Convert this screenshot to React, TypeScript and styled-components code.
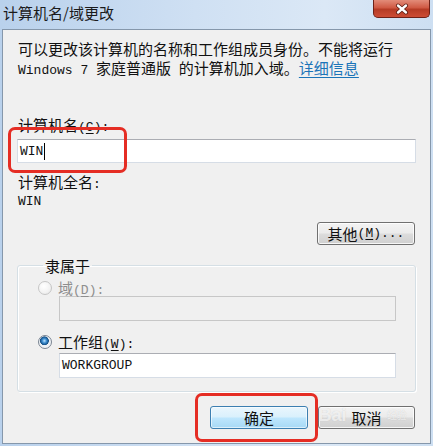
import React from "react";
import styled, { createGlobalStyle, css } from "styled-components";

const GlobalStyle = createGlobalStyle`
  html, body { margin: 0; padding: 0; }
  body { width: 433px; height: 446px; overflow: hidden; background: #cadcf1; }
  * { box-sizing: border-box; }
`;

const Window = styled.div`
  position: relative;
  width: 433px;
  height: 446px;
  display: flex;
  flex-direction: column;
  background: linear-gradient(to right, #b9d1ec 0%, #cfe0f3 45%, #dbe8f6 75%, #cddff2 100%);
  font-family: "Noto Sans CJK SC", sans-serif;
  color: #111;
`;

const TitleBar = styled.div`
  height: 29px;
  flex-shrink: 0;
  display: flex;
  align-items: flex-start;
  justify-content: space-between;
  padding: 0 3px 0 3px;
`;

const Title = styled.div`
  font-size: 15px;
  line-height: 18px;
  margin-top: 4px;
  color: #1b1b1b;
`;

const CloseButton = styled.div`
  flex-shrink: 0;
  width: 57px;
  height: 18px;
  border: 1px solid #6e2118;
  border-top: none;
  border-radius: 0 0 5px 5px;
  background-color: #c0422c;
  display: flex;
  align-items: center;
  justify-content: center;
  overflow: hidden;
`;

const CloseGloss = styled.div`
  width: 100%;
  height: 100%;
  display: flex;
  align-items: center;
  justify-content: center;
  background: linear-gradient(to bottom, rgba(255, 200, 185, 0.55) 0%, rgba(255, 160, 140, 0.25) 45%, rgba(120, 20, 0, 0.15) 55%, rgba(255, 120, 90, 0.2) 100%);
`;

const Client = styled.div`
  flex: 1;
  margin: 0 2px 2px 2px;
  border: 1px solid #8597ab;
  background: #f0f0f0;
  padding: 9px 14px 0 14px;
  display: flex;
  flex-direction: column;
  font-size: 15px;
  line-height: 17px;
`;

const Lat = styled.span`
  font-family: "Liberation Mono", monospace;
  font-size: 13px;
  line-height: 1;
`;

const Key = styled.span`
  text-decoration: underline;
  text-underline-offset: 2px;
`;

const Description = styled.div`
  line-height: 19px;
  height: 38px;
  padding-left: 1px;
  white-space: nowrap;
`;

const Link = styled.span`
  color: #1b74b8;
  text-decoration: underline;
  text-underline-offset: 3px;
`;

const Label = styled.div<{ $mt?: number; $lh?: number }>`
  margin-top: ${(p) => p.$mt ?? 0}px;
  line-height: ${(p) => p.$lh ?? 17}px;
  height: ${(p) => p.$lh ?? 17}px;
  padding-left: 1px;
  white-space: nowrap;
`;

const TextBox = styled.div<{ $mt?: number; $h?: number; $disabled?: boolean; $pl?: number }>`
  margin-top: ${(p) => p.$mt ?? 0}px;
  height: ${(p) => p.$h ?? 24}px;
  flex-shrink: 0;
  border: 1px solid #d6dde6;
  border-top-color: #abadb3;
  background: ${(p) => (p.$disabled ? "#f0f0f0" : "#ffffff")};
  ${(p) =>
    p.$disabled &&
    css`
      border-color: #c7c7c7;
    `}
  display: flex;
  align-items: center;
  padding-left: ${(p) => p.$pl ?? 2}px;
`;

const Caret = styled.span`
  display: inline-block;
  width: 1px;
  height: 17px;
  background: #000;
  margin-left: 1px;
`;

const ButtonRow = styled.div<{ $mt: number }>`
  margin-top: ${(p) => p.$mt}px;
  display: flex;
  justify-content: flex-end;
  gap: 10px;
  padding-right: 1px;
  flex-shrink: 0;
`;

const Button = styled.div<{ $default?: boolean; $w: number }>`
  width: ${(p) => p.$w}px;
  height: 23px;
  border: 1px solid #707070;
  border-radius: 3px;
  background: linear-gradient(to bottom, #f3f3f3 0%, #ebebeb 48%, #dcdcdc 52%, #d0d0d0 100%);
  box-shadow: inset 0 0 0 1px rgba(255, 255, 255, 0.8);
  display: flex;
  align-items: center;
  justify-content: center;
  white-space: nowrap;
  ${(p) =>
    p.$default &&
    css`
      border-color: #3c7fb1;
      background: linear-gradient(to bottom, #eaf6fd 0%, #d9f0fc 48%, #bee6fd 52%, #a7d9f5 100%);
      box-shadow: inset 0 0 0 1px rgba(255, 255, 255, 0.6);
    `}
`;

const GroupBox = styled.fieldset`
  margin: 12px 0 0 0;
  padding: 0 19px 13px 20px;
  border: 1px solid #d5dfe5;
  border-radius: 3px;
  box-shadow: inset 1px 1px 0 #ffffff, 1px 1px 0 #ffffff;
  min-width: 0;
  flex-shrink: 0;
`;

const Legend = styled.legend`
  margin-left: 5px;
  padding: 0 2px;
  line-height: 17px;
  height: 17px;
  font-size: 15px;
`;

const RadioRow = styled.div<{ $mt?: number; $disabled?: boolean }>`
  margin-top: ${(p) => p.$mt ?? 0}px;
  height: 17px;
  display: flex;
  align-items: center;
  gap: 6px;
  color: ${(p) => (p.$disabled ? "#8e8e8e" : "#111")};
`;

const Radio = styled.span<{ $checked?: boolean; $disabled?: boolean }>`
  width: 14px;
  height: 14px;
  border-radius: 50%;
  flex-shrink: 0;
  border: 1px solid ${(p) => (p.$disabled ? "#c6c6c6" : "#7b8593")};
  background: ${(p) =>
    p.$checked
      ? "radial-gradient(circle at 45% 40%, #bfe4ff 0%, #3c8dd0 22%, #134f86 42%, #e9eef3 48%, #fbfbfb 100%)"
      : p.$disabled
      ? "radial-gradient(circle at 40% 35%, #ffffff 0%, #f2f2f2 60%, #e2e2e2 100%)"
      : "#fff"};
`;

const FieldIndent = styled.div`
  margin-left: 21px;
`;

const Highlight = styled.div<{ $x: number; $y: number; $w: number; $h: number }>`
  position: absolute;
  left: ${(p) => p.$x}px;
  top: ${(p) => p.$y}px;
  width: ${(p) => p.$w}px;
  height: ${(p) => p.$h}px;
  border: 3px solid #e52d24;
  border-radius: 7px;
  pointer-events: none;
`;

const Watermark = styled.div`
  position: absolute;
  left: 318px;
  top: 404px;
  width: 88px;
  display: flex;
  justify-content: space-between;
  font-family: "Liberation Sans", sans-serif;
  font-size: 19px;
  line-height: 22px;
  font-weight: bold;
  color: rgba(255, 255, 255, 0.7);
  text-shadow: 0 0 1px rgba(120, 120, 120, 0.3);
  letter-spacing: -0.5px;
  pointer-events: none;
`;

const WatermarkCjk = styled.span`
  font-family: "Noto Sans CJK SC", sans-serif;
  font-size: 10px;
  font-weight: normal;
  align-self: center;
`;

export default function App() {
  return (
    <>
      <GlobalStyle />
      <Window>
        <TitleBar>
          <Title>计算机名/域更改</Title>
          <CloseButton>
            <CloseGloss>
              <svg width="16" height="12" viewBox="0 0 16 12">
                <path d="M4 2.5 L12 9.5 M12 2.5 L4 9.5" stroke="#5a1a10" strokeWidth="4" strokeLinecap="round" />
                <path d="M4 2.5 L12 9.5 M12 2.5 L4 9.5" stroke="#ffffff" strokeWidth="2.4" strokeLinecap="round" />
              </svg>
            </CloseGloss>
          </CloseButton>
        </TitleBar>
        <Client>
          <Description>
            可以更改该计算机的名称和工作组成员身份。不能将运行
            <br />
            <Lat>Windows 7 </Lat>家庭普通版<Lat> </Lat>的计算机加入域。<Link>详细信息</Link>
          </Description>

          <Label $mt={38} $lh={19}>
            计算机名<Lat>(<Key>C</Key>):</Lat>
          </Label>
          <TextBox $mt={5} $pl={2}>
            <Lat>WIN</Lat>
            <Caret />
          </TextBox>

          <Label $mt={10}>
            计算机全名<Lat>:</Lat>
          </Label>
          <Label>
            <Lat>WIN</Lat>
          </Label>

          <ButtonRow $mt={15}>
            <Button $w={98}>
              其他<Lat>(<Key>M</Key>)...</Lat>
            </Button>
          </ButtonRow>

          <GroupBox>
            <Legend>隶属于</Legend>
            <RadioRow $mt={5} $disabled>
              <Radio $disabled />
              <span>
                域<Lat>(<Key>D</Key>):</Lat>
              </span>
            </RadioRow>
            <FieldIndent>
              <TextBox $h={25} $disabled />
            </FieldIndent>
            <RadioRow $mt={12}>
              <Radio $checked />
              <span>
                工作组<Lat>(<Key>W</Key>):</Lat>
              </span>
            </RadioRow>
            <FieldIndent>
              <TextBox $mt={3} $h={25} $pl={2}>
                <Lat>WORKGROUP</Lat>
              </TextBox>
            </FieldIndent>
          </GroupBox>

          <ButtonRow $mt={14}>
            <Button $w={98} $default>
              确定
            </Button>
            <Button $w={97}>取消</Button>
          </ButtonRow>
        </Client>
        <Highlight $x={8} $y={127} $w={119} $h={46} />
        <Highlight $x={195} $y={393} $w={123} $h={49} />
        <Watermark>
          <span>Bai</span>
          <WatermarkCjk>经验</WatermarkCjk>
        </Watermark>
      </Window>
    </>
  );
}
